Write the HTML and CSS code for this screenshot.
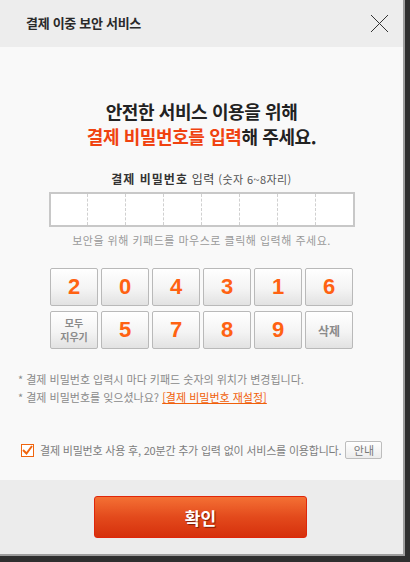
FILE: index.html
```html
<!DOCTYPE html>
<html lang="ko">
<head>
  <meta charset="UTF-8">
  <meta name="viewport" content="width=device-width, initial-scale=1.0">
  <title>결제 이중 보안 서비스</title>
  <link rel="stylesheet" href="styles.css">
</head>
<body>
  <div class="dialog">

    <div class="head">
      <span class="head-title">결제 이중 보안 서비스</span>
      <svg class="close" width="19" height="19" viewBox="0 0 19 19">
        <path d="M1 1 L18 18 M18 1 L1 18" stroke="#333" stroke-width="1" fill="none"/>
      </svg>
    </div>

    <div class="content">
      <h1 class="title">
        안전한 서비스 이용을 위해<br>
        <em>결제 비밀번호를 입력</em>해 주세요.
      </h1>

      <p class="label"><b>결제 비밀번호</b> 입력 <span>(숫자 6~8자리)</span></p>

      <div class="pw">
        <span></span><span></span><span></span><span></span>
        <span></span><span></span><span></span><span></span>
      </div>

      <p class="hint">보안을 위해 키패드를 마우스로 클릭해 입력해 주세요.</p>

      <div class="keypad">
        <div class="key">2</div>
        <div class="key">0</div>
        <div class="key">4</div>
        <div class="key">3</div>
        <div class="key">1</div>
        <div class="key">6</div>
        <div class="key fn small">모두<br>지우기</div>
        <div class="key">5</div>
        <div class="key">7</div>
        <div class="key">8</div>
        <div class="key">9</div>
        <div class="key fn">삭제</div>
      </div>

      <div class="notes">
        <p>* 결제 비밀번호 입력시 마다 키패드 숫자의 위치가 변경됩니다.</p>
        <p>* 결제 비밀번호를 잊으셨나요? <a href="#">[결제 비밀번호 재설정]</a></p>
      </div>

      <div class="keep">
        <span class="check">
          <svg width="11" height="10" viewBox="0 0 11 10">
            <path d="M1 5 L4.5 8.5 L10 1" stroke="#f0650f" stroke-width="2" fill="none"/>
          </svg>
        </span>
        <span class="keep-text">결제 비밀번호 사용 후, 20분간 추가 입력 없이 서비스를 이용합니다.</span>
        <span class="info">안내</span>
      </div>
    </div>

    <div class="foot">
      <a class="ok" href="#">확인</a>
    </div>

  </div>
</body>
</html>
```

FILE: styles.css
```css
*{
  margin:0;
  padding:0;
  box-sizing: border-box;
}
body{
  background-color: #2f2f2f;
  font-family: "Noto Sans CJK KR", "Noto Sans", sans-serif;
}
.dialog{
  width: 405px;
  height: 556px;
  background-color: #f9f9f9;
  border-right: 2px solid #9d9d9d;
  border-bottom: 2px solid #9d9d9d;
  display: flex;
  flex-direction: column;
}

.head{
  height: 47px;
  background-color: #ededed;
  display: flex;
  align-items: center;
  justify-content: space-between;
  padding: 0 14px 2px 26px;
}
.head-title{
  font-size: 13px;
  font-weight: bold;
  color: #2a2a2a;
  letter-spacing: -0.3px;
}
.close{
  display: block;
  margin-top: 2px;
}

.content{
  height: 433px;
  padding-top: 52px;
  display: flex;
  flex-direction: column;
}
.title{
  text-align: center;
  font-size: 18px;
  line-height: 25px;
  font-weight: bold;
  color: #222;
  letter-spacing: -0.4px;
  em{
    font-style: normal;
    color: #f0420f;
  }
}
.label{
  margin-top: 22px;
  text-align: center;
  font-size: 12px;
  line-height: 16px;
  color: #444;
  letter-spacing: 0.4px;
  b{ color: #333; letter-spacing: 1px; }
  span{ font-size: 11px; color: #555; }
}
.pw{
  margin: 5px auto 0;
  width: 306px;
  height: 35px;
  border: 2px solid #c8c8c8;
  background-color: #fff;
  display: flex;
  span{
    flex: 1;
    border-left: 1px dashed #d0d0d0;
    &:first-child{ border-left: none; }
  }
}
.hint{
  margin-top: 5px;
  text-align: center;
  font-size: 11px;
  line-height: 16px;
  color: #999;
  letter-spacing: 0.5px;
}

.keypad{
  margin: 20px auto 0;
  width: 303px;
  display: grid;
  grid-template-columns: repeat(6, 48px);
  grid-auto-rows: 38px;
  column-gap: 3px;
  row-gap: 5px;
}
.key{
  border: 1px solid #b9b9b9;
  border-radius: 2px;
  background: linear-gradient(#ffffff, #f4f4f4 55%, #e2e2e2);
  box-shadow: inset 0 1px 0 #fff;
  display: flex;
  justify-content: center;
  align-items: center;
  font-family: "Liberation Sans", Arial, sans-serif;
  font-weight: bold;
  font-size: 22px;
  color: #ff6212;
  &.fn{
    font-family: "Noto Sans CJK KR", sans-serif;
    font-size: 12px;
    color: #8a8a8a;
  }
  &.small{
    font-size: 10px;
    line-height: 14px;
    text-align: center;
  }
}

.notes{
  margin-top: 21px;
  padding-left: 18px;
  font-size: 11px;
  line-height: 18px;
  color: #8a8a8a;
  a{
    color: #f0600a;
    text-decoration: underline;
  }
}

.keep{
  margin-top: 35px;
  padding-left: 21px;
  display: flex;
  align-items: center;
  font-size: 11px;
  color: #7d7d7d;
}
.check{
  width: 13px;
  height: 13px;
  border: 1px solid #f0650f;
  background-color: #fff;
  display: flex;
  justify-content: center;
  align-items: center;
  margin-right: 6px;
}
.keep-text{
  letter-spacing: -0.2px;
}
.info{
  margin-left: 4px;
  width: 37px;
  height: 18px;
  border: 1px solid #bdbdbd;
  border-radius: 2px;
  background: linear-gradient(#fff, #ececec);
  display: flex;
  justify-content: center;
  align-items: center;
  color: #777;
}

.foot{
  flex: 1;
  background-color: #ececec;
  display: flex;
  justify-content: center;
  padding-top: 16px;
}
.ok{
  margin-left: -2px;
  width: 213px;
  height: 42px;
  border: 1px solid #e0260a;
  border-radius: 3px;
  background: linear-gradient(#f47034, #e34a1c 50%, #d6300c);
  display: flex;
  justify-content: center;
  align-items: center;
  font-size: 17px;
  font-weight: bold;
  color: #fff;
  text-decoration: none;
  text-shadow: 1px 1px 1px #7a1a00;
}
```
